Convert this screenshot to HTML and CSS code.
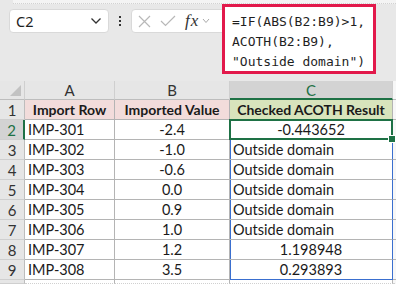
FILE: index.html
```html
<!DOCTYPE html>
<html>
<head>
  <title>ACOTH check</title>
  <link rel="stylesheet" href="styles.css">
</head>
<body>
  <div class="strip"></div>
  <div class="bar">
    <div class="namebox">
      <span>C2</span>
      <svg width="12" height="8" viewBox="0 0 12 8"><path d="M1.5 1.5 L6 6 L10.5 1.5" fill="none" stroke="#333" stroke-width="1.3"/></svg>
    </div>
    <div class="dots"><i></i><i></i><i></i></div>
    <div class="fbar">
      <svg class="ico" width="13" height="13" viewBox="0 0 13 13"><path d="M1 1 L12 12 M12 1 L1 12" stroke="#b8b8b8" stroke-width="1.2"/></svg>
      <svg class="ico" width="16" height="12" viewBox="0 0 16 12"><path d="M1 6 L5.5 10.5 L15 1" fill="none" stroke="#b8b8b8" stroke-width="1.2"/></svg>
      <span class="fx">fx</span>
      <svg class="chev" width="8" height="6" viewBox="0 0 8 6"><path d="M1 1 L4 4.5 L7 1" fill="none" stroke="#aaa" stroke-width="1"/></svg>
    </div>
  </div>

  <div class="formula">=IF(ABS(B2:B9)&gt;1,<br>ACOTH(B2:B9),<br>"Outside domain")</div>

  <div class="sheet">
    <div class="hd corner"><b class="tri"></b></div>
    <div class="hd">A</div>
    <div class="hd">B</div>
    <div class="hd hd-on">C</div>
    <div class="hd end"></div>

    <div class="rh">1</div>
    <div class="c head pink">Import Row</div>
    <div class="c head pink">Imported Value</div>
    <div class="c head green">Checked ACOTH Result</div>
    <div class="c end"></div>

    <div class="rh rh-on">2</div>
    <div class="c">IMP-301</div>
    <div class="c mid">-2.4</div>
    <div class="c mid active">-0.443652</div>
    <div class="c end"></div>

    <div class="rh">3</div>
    <div class="c">IMP-302</div>
    <div class="c mid">-1.0</div>
    <div class="c rng">Outside domain</div>
    <div class="c end"></div>

    <div class="rh">4</div>
    <div class="c">IMP-303</div>
    <div class="c mid">-0.6</div>
    <div class="c rng">Outside domain</div>
    <div class="c end"></div>

    <div class="rh">5</div>
    <div class="c">IMP-304</div>
    <div class="c mid">0.0</div>
    <div class="c rng">Outside domain</div>
    <div class="c end"></div>

    <div class="rh">6</div>
    <div class="c">IMP-305</div>
    <div class="c mid">0.9</div>
    <div class="c rng">Outside domain</div>
    <div class="c end"></div>

    <div class="rh">7</div>
    <div class="c">IMP-306</div>
    <div class="c mid">1.0</div>
    <div class="c rng">Outside domain</div>
    <div class="c end"></div>

    <div class="rh">8</div>
    <div class="c">IMP-307</div>
    <div class="c mid">1.2</div>
    <div class="c mid rng">1.198948</div>
    <div class="c end"></div>

    <div class="rh">9</div>
    <div class="c">IMP-308</div>
    <div class="c mid">3.5</div>
    <div class="c mid rng rng-last">0.293893</div>
    <div class="c end"></div>

    <div class="rh"></div>
    <div class="c blank"></div>
    <div class="c blank"></div>
    <div class="c blank"></div>
    <div class="c blank end"></div>
  </div>
</body>
</html>
```

FILE: styles.css
```css
* {box-sizing: border-box;}
body {
  margin: 0;
  background: #e8e8e8;
  font: 14.5px Lato, "Liberation Sans", sans-serif;
  color: #222;
  position: relative;
  height: 284px;
  overflow: hidden;
}

.strip {
  height: 4px;
  margin-left: 13px;
  background: #f4f4f4;
  border-bottom: 1px dotted #d2d2d2;
}

.bar {
  display: flex;
  align-items: center;
  margin: 5px 0 0 9px;
  height: 24px;
}

.namebox {
  width: 100px;
  height: 24px;
  background: #fff;
  border: 1px solid #d9d9d9;
  border-radius: 4px;
  display: flex;
  align-items: center;
  justify-content: space-between;
  padding: 0 6px 0 6px;
  font: 14.5px "Noto Sans", "Liberation Sans", sans-serif;
  color: #1f1f1f;
}

.dots {
  width: 22px;
  display: flex;
  flex-direction: column;
  align-items: center;
  gap: 2px;
}
.dots i {
  width: 2px;
  height: 2px;
  background: #333;
}

.fbar {
  width: 241px;
  height: 24px;
  background: #fff;
  border: 1px solid #d9d9d9;
  border-radius: 4px;
  display: flex;
  align-items: center;
  padding-left: 6px;
}
.ico {margin-right: 9px;}
.fx {
  font: italic 17px "Liberation Serif", serif;
  color: #333;
  letter-spacing: 1px;
}
.chev {margin-left: 3px;}

.formula {
  position: absolute;
  left: 222px;
  top: 4px;
  width: 154px;
  height: 70px;
  background: #fff;
  border: 3px solid #e2194b;
  padding: 5px 0 0 7px;
  font: 13px "DejaVu Sans Mono", monospace;
  line-height: 20px;
  color: #1f1f1f;
  white-space: nowrap;
}

.sheet {
  margin-top: 48px;
  display: grid;
  grid-template-columns: 25px 90px 115px 163px 3px;
  grid-template-rows: 19px repeat(9, 20px) 4px;
}

.hd {
  background: #e6e6e6;
  border-right: 1px solid #cfcfcf;
  border-bottom: 1px solid #bdbdbd;
  display: flex;
  align-items: center;
  justify-content: center;
  color: #333;
  font-size: 15px;
}
.hd-on {
  background: #d3d3d3;
  color: #1e7145;
  border-bottom: 2px solid #1e7145;
}
.corner {
  align-items: flex-end;
  justify-content: flex-end;
  padding: 0 3px 3px 0;
}
.tri {
  width: 0;
  height: 0;
  border-left: 11px solid transparent;
  border-bottom: 11px solid #c2c2c2;
}

.rh {
  background: #e6e6e6;
  border-right: 1px solid #bdbdbd;
  border-bottom: 1px solid #cfcfcf;
  display: flex;
  align-items: center;
  justify-content: center;
  color: #333;
  font-size: 15px;
}
.rh-on {
  background: #d3d3d3;
  color: #1e7145;
  border-right: 2px solid #1e7145;
}

.c {
  background: #fff;
  border-right: 1px solid #b4b4b4;
  border-bottom: 1px solid #b4b4b4;
  display: flex;
  align-items: center;
  padding: 0 3px;
  white-space: nowrap;
  color: #1a1a1a;
}
.mid {justify-content: center;}
.head {
  justify-content: center;
  font-weight: bold;
  font-size: 14px;
}
.pink {background: #f2dcdb;}
.green {background: #d8e4bc;}
.end {border-right: none; background: #f7f7f7;}
.blank {border-bottom: 1px dotted #d0d0d0;}

/* range C3:C9 */
.rng {
  border-right: 1px solid #3a6fcf;
  box-shadow: inset 1px 0 #3a6fcf;
}
.rng-last {border-bottom: 1px solid #3a6fcf;}

/* active cell C2 */
.active {
  position: relative;
  z-index: 2;
}
.active::before {
  content: "";
  position: absolute;
  inset: -1px -1px -1px -1px;
  border: 2px solid #1e7145;
}
.active::after {
  content: "";
  position: absolute;
  right: -4px;
  bottom: -4px;
  width: 6px;
  height: 6px;
  background: #1e7145;
  border: 1px solid #fff;
}
```
